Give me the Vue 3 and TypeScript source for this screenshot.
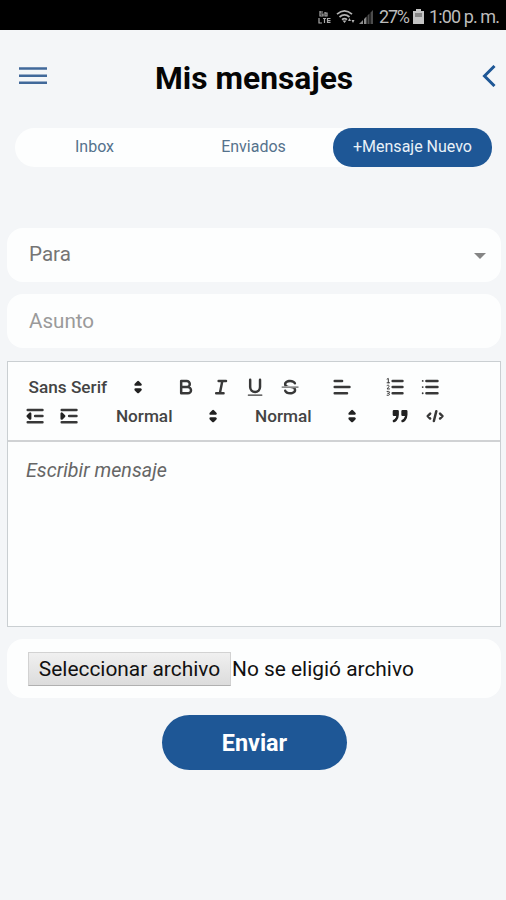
<script setup lang="ts">
import { ref } from 'vue'

interface Tab { label: string; active: boolean }

const tabs = ref<Tab[]>([
  { label: 'Inbox', active: false },
  { label: 'Enviados', active: false },
  { label: '+Mensaje Nuevo', active: true },
])
</script>

<template>
  <div class="screen">
    <div class="status">
      <svg class="lte" viewBox="0 0 13 14">
        <path d="M2 1v5h3V4H3M2 2h3M7 2v4h2V3H7" />
        <path d="M1 8v5h3M5 8.5h3M6.500 8.500v4.500M12.500 8.500h-3v4h3M9.500 10.700h3" />
      </svg>
      <svg class="wifi" viewBox="0 0 20 16">
        <path d="M1 5.200Q8.500-1.500 16 5.200M3.500 8Q8.500 3.600 13.500 8M6 10.700Q8.500 8.500 11 10.700" />
        <path class="solid" d="M6.500 11.500h4l-2 2.500zM12 12h3l-1.500-3zM15.500 11h3l-1.500 3z" />
      </svg>
      <svg class="signal" viewBox="0 0 14 14">
        <path class="lit" d="M0 14l4-4v4zM5 9l2.500-2.500V14H5z" />
        <path class="dim" d="M8.500 5.500L10.500 3.500V14h-2zM11.500 2.500L14 0v14h-2.500z" />
      </svg>
      <span class="percent">27%</span>
      <svg class="battery" viewBox="0 0 11 15">
        <path d="M3 0h5v2h3v13H0V2h3z" />
        <path class="gap" d="M2 4h7v4H2z" />
      </svg>
      <span class="clock">1:00 p. m.</span>
    </div>

    <header class="header">
      <svg class="menu" viewBox="0 0 28 18">
        <path d="M0 1.500h28M0 8.700h28M0 15.800h28" />
      </svg>
      <h1>Mis mensajes</h1>
      <svg class="back" viewBox="0 0 14 22"><path d="M12.500 1L2.500 11l10 10" /></svg>
    </header>

    <nav class="tabs">
      <button v-for="tab in tabs" :key="tab.label" :class="['tab', { active: tab.active }]">{{ tab.label }}</button>
    </nav>

    <main class="form">
      <div class="field to"><span>Para</span><i class="caret"></i></div>
      <div class="field subject"><span>Asunto</span></div>

      <section class="editor">
        <div class="toolbar">
          <div class="row">
            <div class="group picker font">
              <span>Sans Serif</span>
              <svg viewBox="0 0 18 18"><path class="arrow" d="M7 11l2 2 2-2zM7 7l2-2 2 2z" /></svg>
            </div>
            <div class="group">
              <button><svg viewBox="0 0 18 18"><path d="M5 4h4.500a2.500 2.500 0 0 1 0 5H5zM5 9h5.500a2.500 2.500 0 0 1 0 5H5z" /></svg></button>
              <button><svg viewBox="0 0 18 18"><path d="M7 4h6M5 14h6M8 14l2-10" /></svg></button>
              <button><svg viewBox="0 0 18 18"><path d="M5 3v6a4 4 0 0 0 8 0V3" /><rect class="fill" x="3" y="15" width="12" height="1" rx=".5" /></svg></button>
              <button>
                <svg viewBox="0 0 18 18">
                  <path class="thin" d="M2.500 9h13" />
                  <path class="fill" d="M9.007 8C6.542 7.791 6 7.519 6 6.500 6 5.792 7.283 5 9 5c1.571 0 2.765.679 2.969 1.309a1 1 0 0 0 1.900-.617C13.356 4.106 11.354 3 9 3 6.200 3 4 4.538 4 6.500a3.200 3.200 0 0 0 .5 1.843Z" />
                  <path class="fill" d="M8.984 10C11.457 10.208 12 10.479 12 11.500c0 .708-1.283 1.500-3 1.500-1.571 0-2.765-.679-2.969-1.309a1 1 0 1 0-1.900.617C4.644 13.894 6.646 15 9 15c2.800 0 5-1.538 5-3.500a3.200 3.200 0 0 0-.5-1.843Z" />
                </svg>
              </button>
            </div>
            <div class="group">
              <button><svg viewBox="0 0 18 18"><path d="M3 4h6M3 9h12M3 14h10" /></svg></button>
            </div>
            <div class="group">
              <button>
                <svg viewBox="0 0 18 18">
                  <path d="M7 4h8M7 9h8M7 14h8" />
                  <path class="thin" d="M2.500 2.500l1-.5v3.500M2.500 5.500h2M2.500 7.700c1-.7 2 0 1.500.9l-1.500 1.900h2M2.500 12.500h1.300c.9 0 .9 1.500 0 1.500H3M3.800 14c.9 0 .9 1.600 0 1.600H2.500" />
                </svg>
              </button>
              <button><svg viewBox="0 0 18 18"><path d="M6 4h9M6 9h9M6 14h9" /><path class="dots" d="M3 4h0M3 9h0M3 14h0" /></svg></button>
            </div>
          </div>
          <div class="row">
            <div class="group">
              <button><svg viewBox="0 0 18 18"><path d="M3 14h12M3 4h12M9 9h6" /><path class="arrow" d="M5 7v4L3 9z" /></svg></button>
              <button><svg viewBox="0 0 18 18"><path d="M3 14h12M3 4h12M9 9h6" /><path class="arrow" d="M3 7v4l2-2z" /></svg></button>
            </div>
            <div v-for="n in 2" :key="n" class="group picker">
              <span>Normal</span>
              <svg viewBox="0 0 18 18"><path class="arrow" d="M7 11l2 2 2-2zM7 7l2-2 2 2z" /></svg>
            </div>
            <div class="group">
              <button><svg viewBox="0 0 18 18"><path class="arrow" d="M4 5h3v3H4zM11 5h3v3h-3zM7 8c0 4.031-3 5-3 5M14 8c0 4.031-3 5-3 5" /></svg></button>
              <button><svg viewBox="0 0 18 18"><path d="M5 7L3 9l2 2M13 7l2 2-2 2M10 5L8 13" /></svg></button>
            </div>
          </div>
        </div>
        <div class="message">Escribir mensaje</div>
      </section>

      <div class="field attach">
        <button class="choose">Seleccionar archivo</button>
        <span class="filename">No se eligió archivo</span>
      </div>

      <button class="send">Enviar</button>
    </main>
  </div>
</template>

<style>
body {
  margin: 0;
  background: #f4f6f8;
}
</style>

<style scoped>
.screen {
  box-sizing: border-box;
  width: 506px;
  height: 900px;
  overflow: hidden;
  background: #f4f6f8;
  font-family: Roboto, "Liberation Sans", sans-serif;
  color: #111;
}
button {
  margin: 0;
  padding: 0;
  border: 0;
  background: none;
  font: inherit;
  color: inherit;
}
svg {
  display: block;
  flex: none;
  fill: none;
}
span, h1 { white-space: nowrap; }

.status {
  display: flex;
  align-items: center;
  height: 30px;
  box-sizing: border-box;
  padding: 3px 0 0 318px;
  background: #000;
  color: #bcbcbc;
  font-size: 18px;
}
.lte { width: 13px; height: 14px; stroke: #aaa; stroke-width: 1.2; }
.wifi { width: 20px; height: 16px; margin-left: 5px; stroke: #b4b4b4; stroke-width: 1.7; }
.wifi .solid { fill: #b4b4b4; stroke: none; }
.signal { width: 14px; height: 14px; margin-left: 3px; }
.lit { fill: #8c8c8c; }
.dim { fill: #4c4c4c; }
.percent { width: 29px; margin-left: 6px; letter-spacing: -1.2px; }
.battery { width: 11px; height: 15px; margin-left: 5px; fill: #c4c4c4; }
.battery .gap { fill: #858585; }
.clock { margin-left: 5px; letter-spacing: -0.9px; }

.header {
  display: flex;
  align-items: center;
  height: 98px;
  box-sizing: border-box;
  padding: 0 10px 6px 19px;
}
.menu { width: 28px; height: 18px; stroke: #41699a; stroke-width: 2.4; }
h1 {
  flex: 1;
  margin: 4px 0 0;
  padding-left: 108px;
  font-size: 31.800px;
  line-height: 38px;
  font-weight: 700;
  color: #050505;
}
.back { width: 14px; height: 22px; stroke: #1e5796; stroke-width: 3; }

.tabs {
  display: flex;
  height: 39px;
  margin: 0 14px 0 15px;
  border-radius: 20px;
  background: #fdfefe;
}
.tab {
  flex: 1;
  padding-bottom: 2px;
  border-radius: 19px;
  font-size: 16px;
  color: #55728c;
}
.tab.active { background: #1e5796; color: #e9f1f8; }

.form {
  display: flex;
  flex-direction: column;
  padding: 61px 5px 0 7px;
}
.field {
  display: flex;
  align-items: center;
  justify-content: space-between;
  height: 54px;
  box-sizing: border-box;
  padding: 0 15px 2px 22px;
  border-radius: 16px;
  background: #fdfefe;
  font-size: 20.600px;
}
.to { color: #757575; }
.subject { margin-top: 12px; padding-bottom: 0; color: #9a9a9a; }
.caret {
  border: 6px solid transparent;
  border-top-color: #858585;
  border-bottom: 0;
  margin-top: 4px;
}

.editor {
  display: flex;
  flex-direction: column;
  height: 266px;
  box-sizing: border-box;
  margin-top: 13px;
  border: 1px solid #cacfd2;
  background: #fdfefe;
}
.toolbar {
  display: flex;
  flex-direction: column;
  height: 80px;
  box-sizing: border-box;
  padding: 10px 0 0 9.600px;
  border-bottom: 2px solid #d0d2d4;
}
.row { display: flex; gap: 18.100px; height: 29.600px; }
.group { display: flex; }
.group button, .group svg {
  stroke: #383838;
  stroke-width: 2;
  stroke-linecap: round;
  stroke-linejoin: round;
}
.group button {
  display: flex;
  align-items: center;
  justify-content: center;
  width: 34.600px;
}
.group svg { width: 22.200px; height: 22.200px; }
.group .fill { fill: #383838; stroke: none; }
.group .arrow { fill: #222; stroke: #222; }
.group .thin { stroke-width: 0.8; }
.group .dots { stroke-width: 1.5; }
.picker {
  align-items: center;
  justify-content: space-between;
  width: 121px;
  box-sizing: border-box;
  padding: 0 2px 0 11px;
  font-size: 17.200px;
  font-weight: 500;
  color: #444;
}
.picker.font { width: 133.100px; }
.message {
  padding: 16px 18px;
  font-size: 19.700px;
  line-height: 25px;
  font-style: italic;
  color: #666;
}

.attach {
  justify-content: flex-start;
  height: 59px;
  margin-top: 12px;
  padding-left: 21px;
  padding-bottom: 0;
  font-size: 20.900px;
}
.choose {
  width: 203px;
  height: 34px;
  box-sizing: border-box;
  border: 1px solid #d2d2d2;
  border-bottom-color: #b0b0b0;
  background: linear-gradient(#f0f0f0, #dcdcdc);
  white-space: nowrap;
}
.filename { margin-left: 1px; }
.send {
  align-self: center;
  width: 185px;
  height: 55px;
  margin: 17px 0 0 1px;
  padding-top: 1px;
  border-radius: 28px;
  background: #1e5796;
  color: #fff;
  font-size: 23.400px;
  font-weight: 700;
}
</style>
